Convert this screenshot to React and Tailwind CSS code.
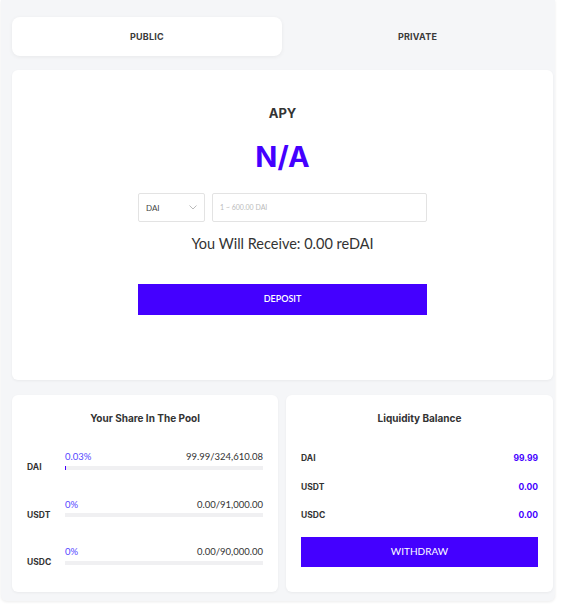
import React from "react";

const shares = [
  { name: "DAI", pct: "0.03%", amount: "99.99/324,610.08", fill: 1 },
  { name: "USDT", pct: "0%", amount: "0.00/91,000.00", fill: 0 },
  { name: "USDC", pct: "0%", amount: "0.00/90,000.00", fill: 0 },
];

const balances = [
  { name: "DAI", value: "99.99" },
  { name: "USDT", value: "0.00" },
  { name: "USDC", value: "0.00" },
];

const head = { fontFamily: "Inter, 'Noto Sans', sans-serif" };

const App = () => {
  return (
    <div className="w-[561px] h-[604px] bg-white" style={{ fontFamily: "Lato, 'Noto Sans', sans-serif" }}>
      <div className="w-[554px] h-[601px] ml-[1px] bg-[#f5f6f8] rounded-b-md shadow-[0_1px_3px_rgba(0,0,0,0.08)] pl-[11px] pr-[2px] pt-[17px]">
        {/* Tabs */}
        <div className="flex h-[39px]">
          <button className="w-[270px] h-full bg-white rounded-lg shadow-[0_1px_4px_rgba(0,0,0,0.06)] text-[9px] font-bold tracking-wide text-[#3a3a3a]" style={head}>
            PUBLIC
          </button>
          <button className="flex-1 h-full text-[9px] font-bold tracking-wide text-[#3a3a3a]" style={head}>
            PRIVATE
          </button>
        </div>

        {/* Deposit card */}
        <div className="mt-[14px] h-[310px] bg-white rounded-md shadow-[0_1px_3px_rgba(0,0,0,0.05)] flex flex-col items-center pt-[37px]">
          <div className="text-[13px] font-bold text-[#333] leading-none" style={head}>APY</div>
          <div className="mt-[22px] text-[29px] font-bold text-[#4400ff] leading-none" style={head}>N/A</div>
          <div className="mt-[22px] flex gap-[7px]">
            <div className="w-[67px] h-[29px] border border-[#e3e3e3] rounded-[2px] flex items-center justify-between px-[7px]">
              <span className="text-[8px] text-[#444]">DAI</span>
              <svg width="8" height="5" viewBox="0 0 8 5" fill="none" stroke="#aaa" strokeWidth="0.8">
                <path d="M0.5 0.5 L4 4 L7.5 0.5" />
              </svg>
            </div>
            <div className="w-[215px] h-[29px] border border-[#e3e3e3] rounded-[2px] flex items-center px-[7px]">
              <span className="text-[7px] text-[#bbb]">1 ~ 600.00 DAI</span>
            </div>
          </div>
          <div className="mt-[15px] text-[14.5px] text-[#333] leading-none">You Will Receive: 0.00 reDAI</div>
          <button className="mt-[32px] w-[289px] h-[31px] bg-[#4400ff] text-white text-[9px] font-semibold">
            DEPOSIT
          </button>
        </div>

        {/* Bottom cards */}
        <div className="mt-[15px] flex gap-[8px] h-[197px]">
          <div className="w-[266px] bg-white rounded-md shadow-[0_1px_3px_rgba(0,0,0,0.05)] px-[15px] pt-[16px]">
            <div className="text-center text-[10px] font-bold text-[#333]" style={head}>Your Share In The Pool</div>
            <div className="mt-[26px] flex flex-col gap-[30px]">
              {shares.map((s) => (
                <div key={s.name} className="flex items-end">
                  <div className="w-[38px] text-[8.5px] font-bold text-[#333] leading-none -mb-[2px]" style={head}>{s.name}</div>
                  <div className="flex-1">
                    <div className="flex justify-between text-[9.5px] leading-none">
                      <span className="text-[#5548ff]">{s.pct}</span>
                      <span className="text-[#333]">{s.amount}</span>
                    </div>
                    <div className="mt-[4px] h-[4px] bg-[#f0f0f2] relative">
                      {s.fill > 0 && <div className="absolute left-0 top-0 h-full w-[1px] bg-[#4400ff]" />}
                    </div>
                  </div>
                </div>
              ))}
            </div>
          </div>
          <div className="flex-1 bg-white rounded-md shadow-[0_1px_3px_rgba(0,0,0,0.05)] px-[15px] pt-[16px]">
            <div className="text-center text-[10px] font-bold text-[#333]" style={head}>Liquidity Balance</div>
            <div className="mt-[28px] flex flex-col gap-[20px]">
              {balances.map((b) => (
                <div key={b.name} className="flex justify-between text-[8.5px] font-bold leading-none" style={head}>
                  <span className="text-[#333]">{b.name}</span>
                  <span className="text-[#4400ff]">{b.value}</span>
                </div>
              ))}
            </div>
            <button className="mt-[17px] w-full h-[30px] bg-[#4400ff] text-white text-[10px]">
              WITHDRAW
            </button>
          </div>
        </div>
      </div>
    </div>
  );
};

export default App;
